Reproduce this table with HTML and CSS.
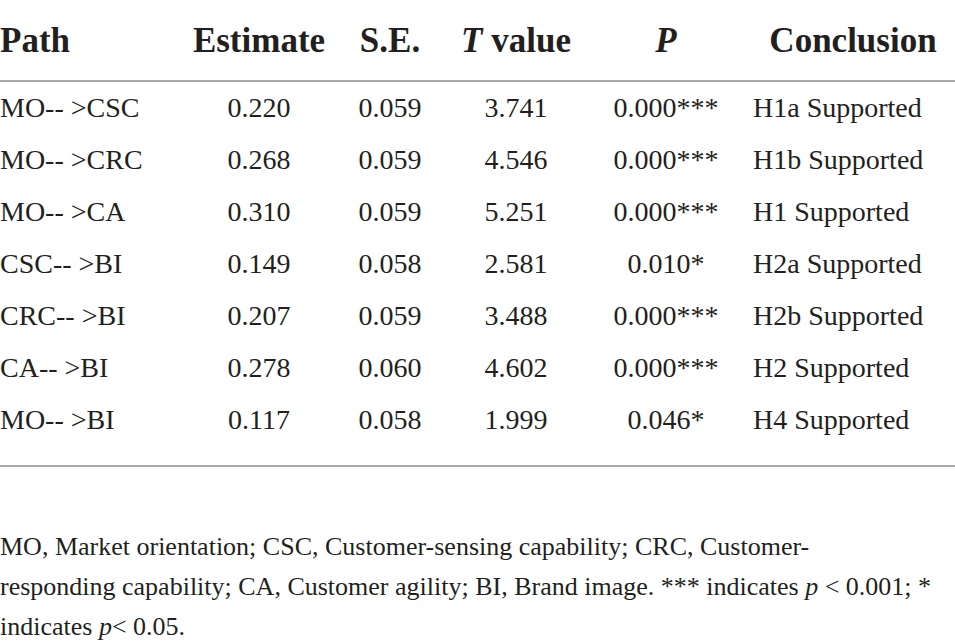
FILE: index.html
```html
<!DOCTYPE html>
<html lang="en">
  <head>
    <meta charset="UTF-8" />
    <title>Path analysis</title>
    <link rel="stylesheet" href="styles.css">
  </head>
  <body>
    <table class="results">
      <thead>
        <tr>
          <th class="path">Path</th>
          <th class="estimate">Estimate</th>
          <th class="se">S.E.</th>
          <th class="tvalue"><i>T</i> value</th>
          <th class="p"><i>P</i></th>
          <th class="conclusion">Conclusion</th>
        </tr>
      </thead>
      <tbody>
        <tr>
          <td class="path">MO-- &gt;CSC</td>
          <td>0.220</td>
          <td>0.059</td>
          <td>3.741</td>
          <td>0.000***</td>
          <td class="conclusion">H1a Supported</td>
        </tr>
        <tr>
          <td class="path">MO-- &gt;CRC</td>
          <td>0.268</td>
          <td>0.059</td>
          <td>4.546</td>
          <td>0.000***</td>
          <td class="conclusion">H1b Supported</td>
        </tr>
        <tr>
          <td class="path">MO-- &gt;CA</td>
          <td>0.310</td>
          <td>0.059</td>
          <td>5.251</td>
          <td>0.000***</td>
          <td class="conclusion">H1 Supported</td>
        </tr>
        <tr>
          <td class="path">CSC-- &gt;BI</td>
          <td>0.149</td>
          <td>0.058</td>
          <td>2.581</td>
          <td>0.010*</td>
          <td class="conclusion">H2a Supported</td>
        </tr>
        <tr>
          <td class="path">CRC-- &gt;BI</td>
          <td>0.207</td>
          <td>0.059</td>
          <td>3.488</td>
          <td>0.000***</td>
          <td class="conclusion">H2b Supported</td>
        </tr>
        <tr>
          <td class="path">CA-- &gt;BI</td>
          <td>0.278</td>
          <td>0.060</td>
          <td>4.602</td>
          <td>0.000***</td>
          <td class="conclusion">H2 Supported</td>
        </tr>
        <tr>
          <td class="path">MO-- &gt;BI</td>
          <td>0.117</td>
          <td>0.058</td>
          <td>1.999</td>
          <td>0.046*</td>
          <td class="conclusion">H4 Supported</td>
        </tr>
      </tbody>
    </table>
    <p class="note">
      MO, Market orientation; CSC, Customer-sensing capability; CRC, Customer-<br>responding
      capability; CA, Customer agility; BI, Brand image. *** indicates <i>p</i> &lt; 0.001; *
      indicates <i>p</i>&lt; 0.05.
    </p>
  </body>
</html>
```

FILE: styles.css
```css
body {
  margin: 0;
  background-color: white;
  color: #231f20;
  font-family: "Liberation Serif", serif;
}

.results {
  width: 955px;
  border-collapse: collapse;
  table-layout: fixed;
}

th,
td {
  padding: 0;
  text-align: center;
  white-space: nowrap;
}

th {
  font-size: 35px;
  font-weight: bold;
  line-height: 78px;
  padding-top: 2px;
  border-bottom: 2px solid #aaaaaa;
}

td {
  font-size: 28px;
  line-height: 52px;
}

tbody tr:last-child td {
  padding-bottom: 19px;
  border-bottom: 2px solid #aaaaaa;
}

.path {
  width: 180px;
  text-align: left;
}

.estimate {
  width: 158px;
}

.se {
  width: 104px;
}

.tvalue {
  width: 148px;
}

.p {
  width: 152px;
}

th.conclusion {
  padding-left: 9px;
}

td.conclusion {
  text-align: left;
  padding-left: 11px;
}

.note {
  margin: 60px 0 0;
  font-size: 26px;
  line-height: 40px;
}
```
